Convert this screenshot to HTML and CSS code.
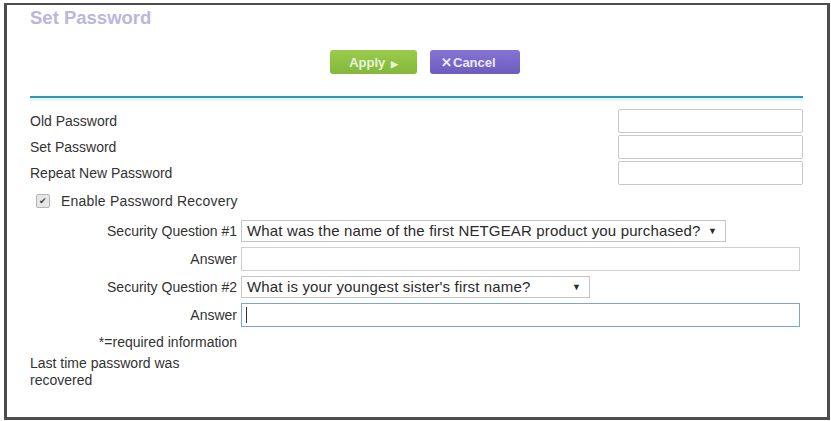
FILE: index.html
```html
<!DOCTYPE html>
<html lang="en">
<head>
  <meta charset="UTF-8">
  <title>Set Password</title>
  <link rel="stylesheet" href="styles.css">
</head>
<body>

<div class="frame">
  <h1 class="title">Set Password</h1>

  <div class="actions">
    <button class="btn apply">Apply <span class="arrow">&#9654;</span></button>
    <button class="btn cancel"><span class="x">&#10005;</span>Cancel</button>
  </div>

  <div class="rule"></div>

  <!-- password fields -->
  <div class="pw-fields">
    <div class="pw-row">
      <label>Old Password</label>
      <input type="password" class="box">
    </div>
    <div class="pw-row">
      <label>Set Password</label>
      <input type="password" class="box">
    </div>
    <div class="pw-row">
      <label>Repeat New Password</label>
      <input type="password" class="box">
    </div>
  </div>

  <label class="check">
    <span class="tick">&#10004;</span>
    Enable Password Recovery
  </label>

  <!-- recovery questions -->
  <div class="qa">
    <label>Security Question #1</label>
    <div class="select q1">What was the name of the first NETGEAR product you purchased?</div>
    <label>Answer</label>
    <input type="text" class="answer">
    <label>Security Question #2</label>
    <div class="select q2">What is your youngest sister's first name?</div>
    <label>Answer</label>
    <div class="answer focused"><span class="caret"></span></div>
    <span class="note">*=required information</span>
  </div>

  <p class="last">Last time password was recovered</p>
</div>

</body>
</html>
```

FILE: styles.css
```css
body {
  margin: 0;
  background: #fff;
  font-family: 'Liberation Sans', Arial, sans-serif;
  color: #333;
}
.frame {
  margin: 3px 1px 0 4px;
  height: 417px;
  border: 3px solid #4d4d4d;
  border-top-width: 2px;
  padding: 0 24px 0 23px;
  box-sizing: border-box;
}
.title {
  margin: 2px 0 0;
  font-size: 18.5px;
  line-height: 22px;
  color: #bab6dd;
}
.actions {
  display: flex;
  gap: 13px;
  margin: 21px 0 0 300px;
}
.btn {
  height: 24px;
  border: none;
  border-radius: 3px;
  color: #e9f3dc;
  font-family: inherit;
  font-size: 13px;
  font-weight: bold;
  padding: 0;
}
.apply {
  width: 87px;
  background: linear-gradient(#9acb4c, #84b83a);
}
.apply .arrow { font-size: 9px; margin-left: 2px; }
.cancel {
  width: 90px;
  background: linear-gradient(#8673d6, #6e5cbd);
  color: #eceaf8;
  text-align: left;
  padding-left: 11px;
}
.cancel .x { font-size: 13px; margin-right: 1px; }
.rule {
  margin-top: 22px;
  height: 2px;
  background: #2b9bb1;
  border-bottom: 3px solid #e3f7f9;
}
.pw-fields { margin-top: 7px; }
.pw-row {
  display: flex;
  align-items: center;
  height: 26px;
  font-size: 14px;
}
.box {
  margin-left: auto;
  width: 185px;
  height: 24px;
  box-sizing: border-box;
  border: 1px solid #c8c8c8;
  border-radius: 2px;
}
.check {
  display: flex;
  align-items: center;
  gap: 11px;
  margin: 7px 0 0 6px;
  font-size: 14px;
  letter-spacing: 0.2px;
}
.tick {
  width: 12px;
  height: 12px;
  border: 1px solid #b5b5b5;
  border-radius: 2px;
  background: #e6e6e6;
  color: #444;
  font-size: 9px;
  line-height: 12px;
  text-align: center;
}
.qa {
  display: grid;
  grid-template-columns: 207px 1fr;
  column-gap: 4px;
  row-gap: 5px;
  margin-top: 11px;
  margin-right: 3px;
  align-items: center;
  font-size: 14px;
}
.qa label { text-align: right; }
.select {
  position: relative;
  height: 22px;
  box-sizing: border-box;
  border: 1px solid #c4c4c4;
  padding: 1px 0 0 5px;
  font-size: 15px;
  letter-spacing: 0.15px;
  color: #2a2a2a;
}
.select::after {
  content: "\25BC";
  position: absolute;
  right: 8px;
  top: 5px;
  font-size: 9px;
}
.q1 { width: 485px; }
.q2 { width: 349px; }
.answer {
  height: 24px;
  box-sizing: border-box;
  border: 1px solid #cfcfcf;
}
.focused {
  position: relative;
  border-color: #7da5d6;
}
.caret {
  position: absolute;
  left: 4px;
  top: 3px;
  width: 1px;
  height: 16px;
  background: #333;
}
.note {
  grid-column: 1;
  text-align: right;
  margin-top: 2px;
}
.last {
  width: 162px;
  margin: 5px 0 0;
  font-size: 14px;
  line-height: 17px;
}
```
